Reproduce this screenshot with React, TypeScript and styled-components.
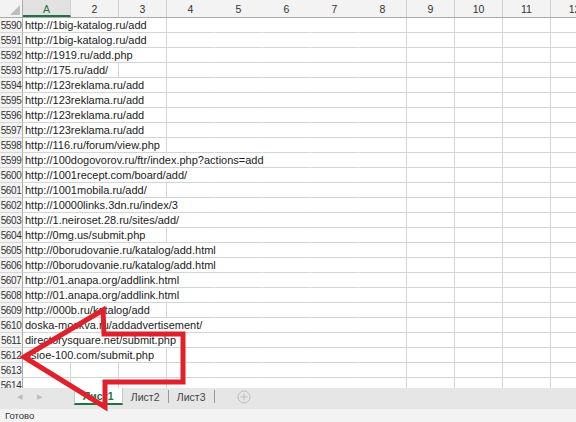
import React from 'react';
import styled, { createGlobalStyle } from 'styled-components';

const GlobalStyle = createGlobalStyle`
  html, body {
    margin: 0;
    padding: 0;
    background: #ffffff;
  }
  * {
    box-sizing: border-box;
  }
`;

const ROW_HEAD = 23;
const COL = 48;
const COLUMNS = ['A', '2', '3', '4', '5', '6', '7', '8', '9', '10', '11', '12'];
// columns 4..7 have no visible right gridline
const hiddenLine = (i: number) => i >= 3 && i <= 6;

type RowData = { n: number; text: string; span: number };

const rows: RowData[] = [
  { n: 5590, text: 'http://1big-katalog.ru/add', span: 3 },
  { n: 5591, text: 'http://1big-katalog.ru/add', span: 3 },
  { n: 5592, text: 'http://1919.ru/add.php', span: 3 },
  { n: 5593, text: 'http://175.ru/add/', span: 2 },
  { n: 5594, text: 'http://123reklama.ru/add', span: 3 },
  { n: 5595, text: 'http://123reklama.ru/add', span: 3 },
  { n: 5596, text: 'http://123reklama.ru/add', span: 3 },
  { n: 5597, text: 'http://123reklama.ru/add', span: 3 },
  { n: 5598, text: 'http://116.ru/forum/view.php', span: 3 },
  { n: 5599, text: 'http://100dogovorov.ru/ftr/index.php?actions=add', span: 6 },
  { n: 5600, text: 'http://1001recept.com/board/add/', span: 4 },
  { n: 5601, text: 'http://1001mobila.ru/add/', span: 3 },
  { n: 5602, text: 'http://10000links.3dn.ru/index/3', span: 4 },
  { n: 5603, text: 'http://1.neiroset.28.ru/sites/add/', span: 4 },
  { n: 5604, text: 'http://0mg.us/submit.php', span: 3 },
  { n: 5605, text: 'http://0borudovanie.ru/katalog/add.html', span: 5 },
  { n: 5606, text: 'http://0borudovanie.ru/katalog/add.html', span: 5 },
  { n: 5607, text: 'http://01.anapa.org/addlink.html', span: 4 },
  { n: 5608, text: 'http://01.anapa.org/addlink.html', span: 4 },
  { n: 5609, text: 'http://000b.ru/katalog/add', span: 3 },
  { n: 5610, text: 'doska-moskva.ru/addadvertisement/', span: 4 },
  { n: 5611, text: 'directorysquare.net/submit.php', span: 4 },
  { n: 5612, text: 'asioe-100.com/submit.php', span: 3 },
  { n: 5613, text: '', span: 1 },
  { n: 5614, text: '', span: 1 },
];

const Window = styled.div`
  position: relative;
  width: 576px;
  height: 422px;
  overflow: hidden;
  background: #ffffff;
  font-family: 'Liberation Sans', Arial, sans-serif;
  color: #1b1b1b;
`;

const Grid = styled.div`
  height: 388px;
  overflow: hidden;
`;

const HeaderRow = styled.div`
  display: flex;
  height: 18px;
  background: #f3f3f3;
  border-bottom: 1px solid #ababab;
`;

const Corner = styled.div`
  position: relative;
  flex: 0 0 ${ROW_HEAD}px;
  border-right: 1px solid #ababab;
`;

const CornerMark = styled.div`
  position: absolute;
  right: 2px;
  bottom: 2px;
  width: 0;
  height: 0;
  border-left: 10px solid transparent;
  border-bottom: 10px solid #bdbdbd;
`;

const ColHead = styled.div<{ $active?: boolean; $line: boolean }>`
  flex: 0 0 ${COL}px;
  display: flex;
  align-items: center;
  justify-content: center;
  font-size: 10.5px;
  color: ${({ $active }) => ($active ? '#217346' : '#333333')};
  background: ${({ $active }) => ($active ? '#e2e2e2' : 'transparent')};
  border-right: 1px solid ${({ $line }) => ($line ? '#d0d0d0' : 'transparent')};
  border-bottom: ${({ $active }) => ($active ? '2px solid #217346' : 'none')};
  padding-top: ${({ $active }) => ($active ? '2px' : '0')};
`;

const Row = styled.div`
  display: flex;
  height: 15px;
`;

const RowHead = styled.div`
  flex: 0 0 ${ROW_HEAD}px;
  display: flex;
  align-items: center;
  justify-content: center;
  overflow: hidden;
  white-space: nowrap;
  font-size: 10px;
  letter-spacing: -0.4px;
  color: #333333;
  background: #f3f3f3;
  border-right: 1px solid #ababab;
  border-bottom: 1px solid #d8d8d8;
`;

const Cell = styled.div<{ $span: number; $line: boolean }>`
  flex: 0 0 ${({ $span }) => $span * COL}px;
  display: flex;
  align-items: center;
  padding-left: 2px;
  white-space: nowrap;
  font-size: 11px;
  border-right: 1px solid ${({ $line }) => ($line ? '#d4d4d4' : 'transparent')};
  border-bottom: 1px solid #d4d4d4;
`;

const TabBar = styled.div`
  display: flex;
  align-items: flex-start;
  height: 21px;
  background: #e6e6e6;
  font-size: 10.5px;
`;

const NavArrows = styled.div`
  display: flex;
  align-items: center;
  gap: 15px;
  height: 17px;
  padding-left: 17px;
  width: 74px;
  color: #bcbcbc;
  font-size: 7px;
`;

const Tab = styled.div<{ $active?: boolean }>`
  display: flex;
  align-items: center;
  justify-content: center;
  height: 17px;
  padding: 0 8px;
  min-width: 45px;
  color: ${({ $active }) => ($active ? '#217346' : '#444444')};
  font-weight: ${({ $active }) => ($active ? 700 : 400)};
  background: ${({ $active }) => ($active ? '#ffffff' : 'transparent')};
  border: ${({ $active }) => ($active ? '1px solid #c6c6c6' : 'none')};
  border-top: none;
  border-bottom: ${({ $active }) => ($active ? '2px solid #217346' : 'none')};
`;

const TabSep = styled.div`
  width: 1px;
  height: 13px;
  margin-top: 2px;
  background: #9a9a9a;
`;

const AddSheet = styled.div`
  display: flex;
  align-items: center;
  height: 17px;
  margin-left: 22px;
`;

const StatusBar = styled.div`
  height: 13px;
  display: flex;
  align-items: center;
  padding-left: 5px;
  background: #f3f3f3;
  font-size: 9.5px;
  color: #333333;
`;

const Overlay = styled.svg`
  position: absolute;
  left: 0;
  top: 0;
  pointer-events: none;
`;

function SheetRow({ n, text, span }: RowData) {
  const rest = [];
  for (let i = span; i < COLUMNS.length; i++) {
    rest.push(<Cell key={i} $span={1} $line={!hiddenLine(i)} />);
  }
  return (
    <Row>
      <RowHead>{n}</RowHead>
      <Cell $span={span} $line={!hiddenLine(span - 1)}>
        {text}
      </Cell>
      {rest}
    </Row>
  );
}

export default function App() {
  return (
    <>
      <GlobalStyle />
      <Window>
        <Grid>
          <HeaderRow>
            <Corner>
              <CornerMark />
            </Corner>
            {COLUMNS.map((c, i) => (
              <ColHead key={c} $active={i === 0} $line={!hiddenLine(i)}>
                {c}
              </ColHead>
            ))}
          </HeaderRow>
          {rows.map((r) => (
            <SheetRow key={r.n} {...r} />
          ))}
        </Grid>

        <TabBar>
          <NavArrows>
            <span>◀</span>
            <span>▶</span>
          </NavArrows>
          <Tab $active>Лист1</Tab>
          <Tab>Лист2</Tab>
          <TabSep />
          <Tab>Лист3</Tab>
          <TabSep />
          <AddSheet>
            <svg width="14" height="14" viewBox="0 0 14 14">
              <circle cx="7" cy="7" r="6" fill="none" stroke="#bdbdbd" strokeWidth="1" />
              <path d="M7 3.5v7M3.5 7h7" stroke="#bdbdbd" strokeWidth="1" />
            </svg>
          </AddSheet>
        </TabBar>

        <StatusBar>Готово</StatusBar>

        <Overlay width="576" height="422" viewBox="0 0 576 422">
          <polygon
            points="24,357 103,310 104,334 183,334 183,382 105,382 105,407"
            fill="none"
            stroke="#e0212b"
            strokeWidth="5"
            strokeLinejoin="miter"
          />
        </Overlay>
      </Window>
    </>
  );
}
